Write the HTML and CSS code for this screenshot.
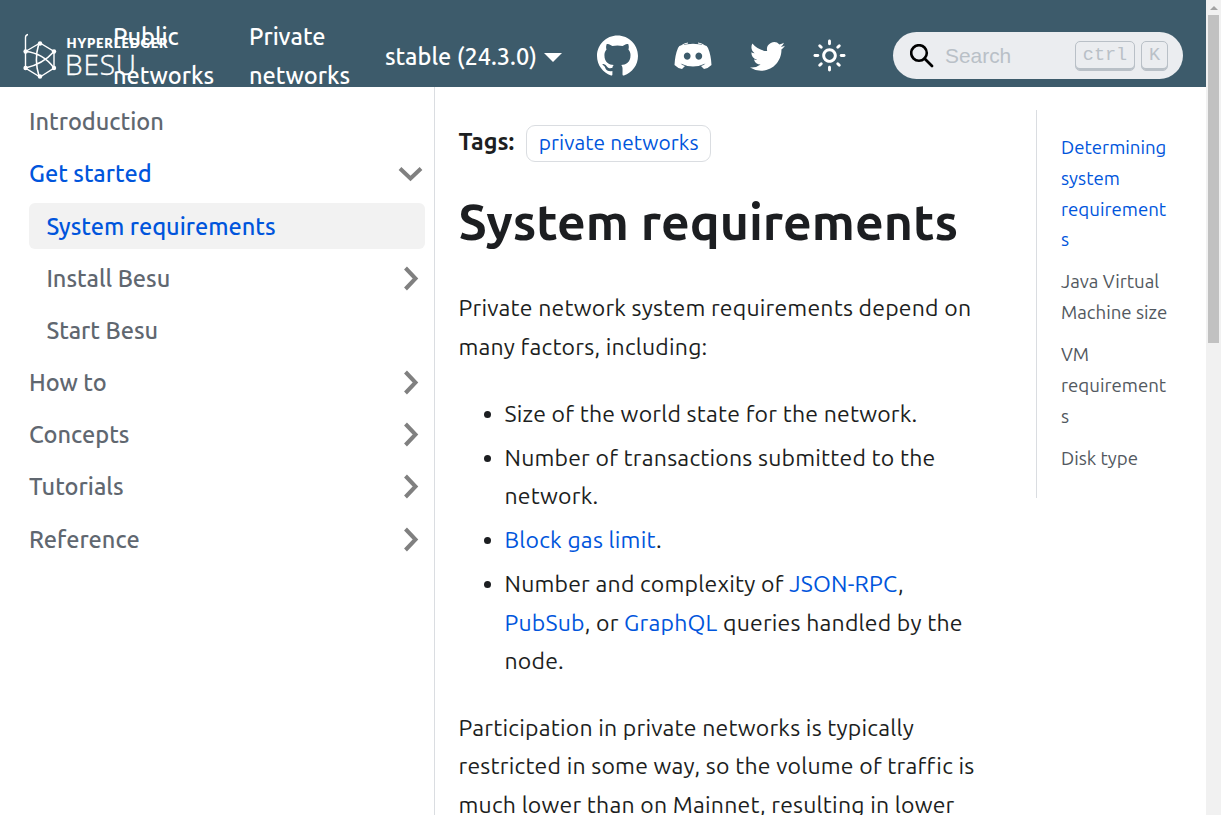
FILE: index.html
```html
<!DOCTYPE html>
<html lang="en">
<head>
<meta charset="utf-8">
<title>System requirements | Besu</title>
<link rel="stylesheet" href="styles.css">
</head>
<body>
<div class="page">
<header class="navbar">
  <a class="brand">
    <svg width="160" height="52" viewBox="0 0 160 52">
      <g fill="none" stroke="#fff" stroke-width="1.4">
        <path d="M5 3.500Q2.500 4 2.500 6.500V37L17 46L31 37V20.500L17 12L2.500 20.500"/>
        <path d="M2.500 20.500Q20 22 31 37M31 20.500Q20 33 2.500 37M15.500 14Q11 29 16 45" stroke-width="1.600"/>
      </g>
      <g fill="#fff"><circle cx="2.600" cy="20.500" r="2.200"/><circle cx="2.600" cy="37" r="2.200"/><circle cx="17" cy="12.500" r="2.200"/><circle cx="31" cy="20.500" r="2.200"/><circle cx="31" cy="37" r="2.200"/><circle cx="17" cy="45.500" r="2.200"/></g>
      <text class="logo-small" x="43.500" y="17" textLength="101">HYPERLEDGER</text>
      <text class="logo-big" x="42" y="44" textLength="71">BESU</text>
    </svg>
  </a>
  <a class="nav-two nav-public">Public<br>networks</a>
  <a class="nav-two nav-private">Private<br>networks</a>
  <a class="version">stable (24.3.0)<i class="caret"></i></a>
  <svg class="github" viewBox="0 0 24 24"><path d="M12 .297c-6.630 0-12 5.373-12 12 0 5.303 3.438 9.800 8.205 11.385.6.113.82-.258.82-.577 0-.285-.010-1.040-.015-2.040-3.338.724-4.042-1.610-4.042-1.610C4.422 18.070 3.633 17.700 3.633 17.700c-1.087-.744.084-.729.084-.729 1.205.084 1.838 1.236 1.838 1.236 1.070 1.835 2.809 1.305 3.495.998.108-.776.417-1.305.76-1.605-2.665-.3-5.466-1.332-5.466-5.930 0-1.310.465-2.380 1.235-3.220-.135-.303-.54-1.523.105-3.176 0 0 1.005-.322 3.300 1.230.96-.267 1.980-.399 3-.405 1.020.006 2.040.138 3 .405 2.280-1.552 3.285-1.230 3.285-1.230.645 1.653.24 2.873.12 3.176.765.84 1.230 1.910 1.230 3.220 0 4.610-2.805 5.625-5.475 5.920.42.36.81 1.096.81 2.220 0 1.606-.015 2.896-.015 3.286 0 .315.21.69.825.57C20.565 22.092 24 17.592 24 12.297c0-6.627-5.373-12-12-12"/></svg>
  <svg class="discord" viewBox="0 0 38 30"><path fill-rule="evenodd" d="M7.500 4.200Q19 1.200 30.500 4.200Q33 4.500 34 7Q37 14 37.500 24Q34 27.500 30 28L27 25Q30 24.200 31.500 22.500Q19 28.500 6.500 22.500Q8 24.200 11 25L8 28Q4 27.500 .5 24Q1 14 4 7Q5 4.500 7.500 4.200ZM13.200 11.500a3.400 3.600 0 1 0 .01 0ZM24.800 11.500a3.400 3.600 0 1 0 .01 0Z"/><path class="arcs" d="M7.500 4.600Q10 2.500 14 2M24 2Q28 2.500 30.500 4.600"/></svg>
  <svg class="twitter" viewBox="0 0 24 24"><path d="M23.953 4.570a10 10 0 01-2.825.775 4.958 4.958 0 002.163-2.723c-.951.555-2.005.959-3.127 1.184a4.920 4.920 0 00-8.384 4.482C7.690 8.095 4.067 6.130 1.640 3.162a4.822 4.822 0 00-.666 2.475c0 1.710.87 3.213 2.188 4.096a4.904 4.904 0 01-2.228-.616v.060a4.923 4.923 0 003.946 4.827 4.996 4.996 0 01-2.212.085 4.936 4.936 0 004.604 3.417 9.867 9.867 0 01-6.102 2.105c-.39 0-.779-.023-1.170-.067a13.995 13.995 0 007.557 2.209c9.053 0 13.998-7.496 13.998-13.985 0-.21 0-.42-.015-.63A9.935 9.935 0 0024 4.590z"/></svg>
  <svg class="sun" viewBox="0 0 24 24"><path d="M12 9c1.650 0 3 1.350 3 3s-1.350 3-3 3-3-1.350-3-3 1.350-3 3-3m0-2c-2.760 0-5 2.240-5 5s2.240 5 5 5 5-2.240 5-5-2.240-5-5-5zM2 13h2c.55 0 1-.45 1-1s-.45-1-1-1H2c-.55 0-1 .45-1 1s.45 1 1 1zm18 0h2c.55 0 1-.45 1-1s-.45-1-1-1h-2c-.55 0-1 .45-1 1s.45 1 1 1zM11 2v2c0 .55.45 1 1 1s1-.45 1-1V2c0-.55-.45-1-1-1s-1 .45-1 1zm0 18v2c0 .55.45 1 1 1s1-.45 1-1v-2c0-.55-.45-1-1-1s-1 .45-1 1zM5.990 4.580a.996.996 0 00-1.410 0 .996.996 0 000 1.410l1.060 1.060c.39.39 1.030.39 1.410 0s.39-1.030 0-1.410L5.990 4.580zm12.370 12.370a.996.996 0 00-1.410 0 .996.996 0 000 1.410l1.060 1.060c.39.39 1.030.39 1.410 0a.996.996 0 000-1.410l-1.060-1.060zm1.060-10.960a.996.996 0 000-1.410.996.996 0 00-1.410 0l-1.060 1.060c-.39.39-.39 1.030 0 1.410s1.030.39 1.410 0l1.060-1.060zM7.050 18.360a.996.996 0 000-1.410.996.996 0 00-1.410 0l-1.060 1.060c-.39.39-.39 1.030 0 1.410s1.030.39 1.410 0l1.060-1.060z"/></svg>
  <div class="search">
    <svg class="glass" viewBox="0 0 24 24"><circle cx="9" cy="9" r="7.800" stroke-width="2.600"/><path d="M14.500 14.500L22 22" stroke-width="2.800" stroke-linecap="round"/></svg>
    <span class="placeholder">Search</span>
    <kbd class="key key-ctrl">ctrl</kbd><kbd class="key key-k">K</kbd>
  </div>
</header>
<div class="body">
  <nav class="sidebar">
    <a class="item">Introduction</a>
    <a class="item active">Get started<svg class="chev" viewBox="0 0 29 29"><path d="M4 9.500L14.500 19.500L25 9.500"/></svg></a>
    <a class="item child active current">System requirements</a>
    <a class="item child">Install Besu<svg class="chev" viewBox="0 0 29 29"><path d="M9.500 4L19.500 14.500L9.500 25"/></svg></a>
    <a class="item child">Start Besu</a>
    <a class="item">How to<svg class="chev" viewBox="0 0 29 29"><path d="M9.500 4L19.500 14.500L9.500 25"/></svg></a>
    <a class="item">Concepts<svg class="chev" viewBox="0 0 29 29"><path d="M9.500 4L19.500 14.500L9.500 25"/></svg></a>
    <a class="item">Tutorials<svg class="chev" viewBox="0 0 29 29"><path d="M9.500 4L19.500 14.500L9.500 25"/></svg></a>
    <a class="item">Reference<svg class="chev" viewBox="0 0 29 29"><path d="M9.500 4L19.500 14.500L9.500 25"/></svg></a>
  </nav>
  <main class="content">
    <div class="tags"><b>Tags:</b><a class="tag">private networks</a></div>
    <h1>System requirements</h1>
    <p>Private network system requirements depend on<br>many factors, including:</p>
    <ul class="factors">
      <li>Size of the world state for the network.</li>
      <li>Number of transactions submitted to the<br>network.</li>
      <li><a>Block gas limit</a>.</li>
      <li>Number and complexity of <a>JSON-RPC</a>,<br><a>PubSub</a>, or <a>GraphQL</a> queries handled by the<br>node.</li>
    </ul>
    <p>Participation in private networks is typically<br>restricted in some way, so the volume of traffic is<br>much lower than on Mainnet, resulting in lower</p>
  </main>
  <aside class="toc">
    <a class="on">Determining<br>system<br>requirement<br>s</a>
    <a>Java Virtual<br>Machine size</a>
    <a>VM<br>requirement<br>s</a>
    <a>Disk type</a>
  </aside>
</div>
</div>
<div class="scrollbar"><i class="up"></i><div class="thumb"></div></div>
</body>
</html>
```
FILE: styles.css
```css
* { box-sizing: border-box; }
body { margin: 0; height: 815px; overflow: hidden; display: flex; background: #fff; color: #1c1e21; font: 23px/38.28px Ubuntu, "Noto Sans", sans-serif; letter-spacing: .21px; white-space: nowrap; }
.page { width: 1206px; height: 815px; overflow: hidden; }
.navbar { height: 87px; overflow: hidden; background: #3d5b6b; color: #fff; display: flex; align-items: center; padding: 0 23px; font-size: 23.55px; font-weight: 500; letter-spacing: 0; }
.navbar svg { flex: none; fill: #fff; }
.brand { width: 90px; height: 52px; flex: none; margin-top: 26px; }
.brand svg { overflow: visible; display: block; }
.logo-small { font: 800 13px Lato, sans-serif; }
.logo-big { font: 300 28px "Open Sans", sans-serif; stroke: #fff; stroke-width: .4px; }
.nav-two { flex: none; line-height: 38.900px; padding-top: 25px; }
.nav-public { width: 136px; }
.nav-private { width: 136px; }
.version { width: 212px; flex: none; display: flex; align-items: center; padding-top: 25px; }
.caret { border: 9px solid transparent; border-top-color: #fff; border-bottom: 0; margin-left: 7px; margin-top: 3px; }
.github { width: 41px; height: 41px; margin-top: 24px; }
.discord { width: 38px; height: 30px; margin: 24px 0 0 36px; }
.arcs { fill: none; stroke: #fff; stroke-width: 1; }
.twitter { width: 35px; height: 35px; margin: 25px 0 0 38px; }
.sun { width: 35px; height: 35px; margin: 24px 0 0 27px; }
.search { width: 290px; height: 47px; flex: none; border-radius: 24px; background: #ebedf0; margin: 24px 0 0 46px; display: flex; align-items: center; padding: 0 15px 0 17px; color: #b9c0c7; }
.search .glass { width: 24px; height: 24px; fill: none; stroke: #000; }
.placeholder { font: 20.9px "Liberation Sans", sans-serif; margin-left: 11px; flex: 1; }
.key { height: 30px; border: 1px solid #b9c0c7; border-radius: 5px; box-shadow: inset 0 -2px 0 #b9c0c7; font: 18.5px/27px "Liberation Mono", monospace; text-align: center; }
.key-ctrl { width: 60px; }
.key-k { width: 27px; margin-left: 6px; }
.body { display: flex; height: 728px; }
.sidebar { width: 435px; border-right: 1px solid #dadde1; padding: 11.600px 9px 0 11.600px; display: flex; flex-direction: column; gap: 5.800px; letter-spacing: 0; }
.item { flex: none; height: 46.400px; padding: 0 0 0 17.400px; line-height: 44.400px; padding-bottom: .9px; display: flex; align-items: center; justify-content: space-between; color: #606770; font-size: 23.550px; font-weight: 500; }
.child { margin-left: 17.400px; }
.active { color: #0055dc; }
.current { background: #f2f2f2; border-radius: 6px; padding-bottom: 0; }
.chev { width: 29px; height: 29px; margin-top: .5px; }
.chev path { fill: none; stroke: #808080; stroke-width: 4; }
.content { width: 601px; padding: 38px 0 0 23.500px; }
.tags { display: flex; align-items: center; height: 37px; }
.tags b { margin-top: -4.5px; font-size: 23.4px; letter-spacing: 0; }
.tag { height: 37px; border: 1px solid #dadde1; border-radius: 9px; margin-left: 12px; padding: 0 11.500px; font-size: 20.900px; line-height: 34px; letter-spacing: .1px; }
.content a { color: #0055dc; }
h1 { margin: 30px 0 39.300px; font-size: 50px; line-height: 58px; font-weight: 700; letter-spacing: 0; }
p { margin: 0 0 29px; }
.factors { margin: 0 0 28.800px; padding-left: 46px; }
.factors li + li { margin-top: 5.800px; }
.toc { width: 150px; height: 388px; margin-top: 23px; border-left: 1px solid #dadde1; padding: 23.200px 0 0 24px; display: flex; flex-direction: column; gap: 11.300px; font-size: 18.660px; line-height: 30.720px; letter-spacing: 0; color: #525860; }
.on { color: #0055dc; }
.scrollbar { width: 15px; height: 815px; background: #f1f1f1; padding-top: 6px; display: flex; flex-direction: column; align-items: center; }
.up { border: 4px solid transparent; border-bottom-color: #a3a3a3; border-top: 0; }
.thumb { width: 11px; height: 328px; margin-top: 5px; background: #c1c1c1; }
```
